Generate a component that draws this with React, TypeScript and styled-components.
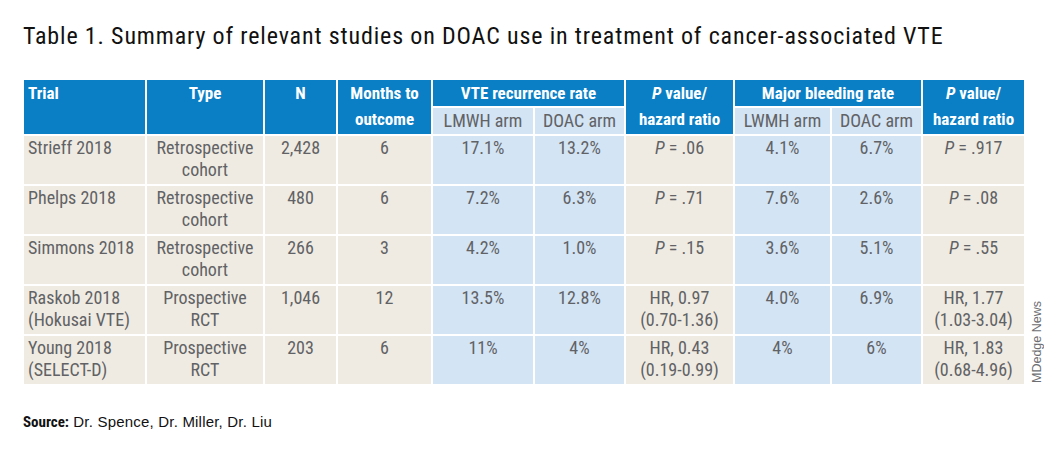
import React from 'react';
import styled, { createGlobalStyle, css } from 'styled-components';

const cond = `"Roboto Condensed", Roboto, "Open Sans", "DejaVu Sans Condensed", sans-serif`;

const GlobalStyle = createGlobalStyle`
    html, body {
        margin: 0;
        padding: 0;
        background: #ffffff;
    }
`;

// ---------------- <Page /> ---------------

const Page = styled.div`
    width: 1056px;
    height: 456px;
    box-sizing: border-box;
    padding: 21px 0 0 23px;
    background: #ffffff;
`;

const Title = styled.h1`
    margin: 0;
    font-family: ${cond};
    font-stretch: 75%;
    font-weight: 400;
    font-size: 24px;
    letter-spacing: 0.85px;
    line-height: 30px;
    color: #111111;
    white-space: nowrap;
`;

const TableRow = styled.div`
    display: flex;
    align-items: flex-end;
    margin-top: 29px;
    margin-left: 1px;
`;

// ---------------- <Grid /> ---------------

const Grid = styled.div`
    display: grid;
    grid-template-columns: 121px 116px 71px 93px 100px 89px 107px 95px 89px 101px;
    grid-template-rows: 26px 26px repeat(5, 48px);
    gap: 2px;
    width: 1000px;
    font-family: ${cond};
    font-stretch: 75%;
    font-size: 18px;
`;

type Tone = 'head' | 'sub' | 'beige' | 'blue';

const toneStyles = {
    head: css`
        background: #0a7fc6;
        color: #ffffff;
        font-weight: 700;
        font-size: 17px;
        line-height: 26px;
    `,
    sub: css`
        background: #d3e4f4;
        color: #616265;
        line-height: 26px;
    `,
    beige: css`
        background: #efebe2;
        color: #616265;
        line-height: 22px;
        padding-top: 1px;
    `,
    blue: css`
        background: #d3e4f4;
        color: #616265;
        line-height: 22px;
        padding-top: 1px;
    `,
};

const Cell = styled.div<{ $tone: Tone; $left?: boolean; $rows?: number; $cols?: number }>`
    box-sizing: border-box;
    padding-left: ${(p) => (p.$left ? '4px' : '0')};
    text-align: ${(p) => (p.$left ? 'left' : 'center')};
    white-space: nowrap;
    ${(p) => p.$rows && css`grid-row: span ${p.$rows};`}
    ${(p) => p.$cols && css`grid-column: span ${p.$cols};`}
    ${(p) => toneStyles[p.$tone]}
`;

const Ital = styled.i`
    font-style: italic;
`;

// ---------------- <Credit /> ---------------

const Credit = styled.div`
    writing-mode: vertical-rl;
    transform: rotate(180deg);
    font-family: "Liberation Sans", Arial, sans-serif;
    font-size: 12.5px;
    line-height: 12px;
    color: #6d6e71;
    margin-left: 7px;
    margin-bottom: 1px;
`;

const Source = styled.p`
    margin: 29px 0 0 0;
    font-family: "Liberation Sans", Arial, sans-serif;
    font-size: 15px;
    letter-spacing: 0.2px;
    color: #111111;

    b {
        font-family: ${cond};
        font-stretch: 75%;
        font-weight: 700;
        font-size: 15px;
        letter-spacing: 0;
    }
`;

type Row = {
    trial: string[];
    type: string[];
    n: string;
    months: string;
    vteL: string;
    vteD: string;
    p1: React.ReactNode;
    bleedL: string;
    bleedD: string;
    p2: React.ReactNode;
};

const pv = (v: string) => (
    <>
        <Ital>P</Ital> = {v}
    </>
);

const hr = (a: string, b: string) => (
    <>
        HR, {a}
        <br />
        {b}
    </>
);

const rows: Row[] = [
    {
        trial: ['Strieff 2018'], type: ['Retrospective', 'cohort'], n: '2,428', months: '6',
        vteL: '17.1%', vteD: '13.2%', p1: pv('.06'), bleedL: '4.1%', bleedD: '6.7%', p2: pv('.917'),
    },
    {
        trial: ['Phelps 2018'], type: ['Retrospective', 'cohort'], n: '480', months: '6',
        vteL: '7.2%', vteD: '6.3%', p1: pv('.71'), bleedL: '7.6%', bleedD: '2.6%', p2: pv('.08'),
    },
    {
        trial: ['Simmons 2018'], type: ['Retrospective', 'cohort'], n: '266', months: '3',
        vteL: '4.2%', vteD: '1.0%', p1: pv('.15'), bleedL: '3.6%', bleedD: '5.1%', p2: pv('.55'),
    },
    {
        trial: ['Raskob 2018', '(Hokusai VTE)'], type: ['Prospective', 'RCT'], n: '1,046', months: '12',
        vteL: '13.5%', vteD: '12.8%', p1: hr('0.97', '(0.70-1.36)'), bleedL: '4.0%', bleedD: '6.9%',
        p2: hr('1.77', '(1.03-3.04)'),
    },
    {
        trial: ['Young 2018', '(SELECT-D)'], type: ['Prospective', 'RCT'], n: '203', months: '6',
        vteL: '11%', vteD: '4%', p1: hr('0.43', '(0.19-0.99)'), bleedL: '4%', bleedD: '6%',
        p2: hr('1.83', '(0.68-4.96)'),
    },
];

const lines = (l: string[]) =>
    l.map((s, i) => (
        <React.Fragment key={i}>
            {i > 0 && <br />}
            {s}
        </React.Fragment>
    ));

export default function App() {
    return (
        <>
            <GlobalStyle />
            <Page>
                <Title>Table 1. Summary of relevant studies on DOAC use in treatment of cancer-associated VTE</Title>
                <TableRow>
                    <Grid>
                        <Cell $tone="head" $rows={2} $left>Trial</Cell>
                        <Cell $tone="head" $rows={2}>Type</Cell>
                        <Cell $tone="head" $rows={2}>N</Cell>
                        <Cell $tone="head" $rows={2}>Months to<br />outcome</Cell>
                        <Cell $tone="head" $cols={2}>VTE recurrence rate</Cell>
                        <Cell $tone="head" $rows={2}><Ital>P</Ital> value/<br />hazard ratio</Cell>
                        <Cell $tone="head" $cols={2}>Major bleeding rate</Cell>
                        <Cell $tone="head" $rows={2}><Ital>P</Ital> value/<br />hazard ratio</Cell>
                        <Cell $tone="sub">LMWH arm</Cell>
                        <Cell $tone="sub">DOAC arm</Cell>
                        <Cell $tone="sub">LWMH arm</Cell>
                        <Cell $tone="sub">DOAC arm</Cell>
                        {rows.map((r) => (
                            <React.Fragment key={r.trial[0]}>
                                <Cell $tone="beige" $left>{lines(r.trial)}</Cell>
                                <Cell $tone="beige">{lines(r.type)}</Cell>
                                <Cell $tone="beige">{r.n}</Cell>
                                <Cell $tone="beige">{r.months}</Cell>
                                <Cell $tone="blue">{r.vteL}</Cell>
                                <Cell $tone="blue">{r.vteD}</Cell>
                                <Cell $tone="beige">{r.p1}</Cell>
                                <Cell $tone="blue">{r.bleedL}</Cell>
                                <Cell $tone="blue">{r.bleedD}</Cell>
                                <Cell $tone="beige">{r.p2}</Cell>
                            </React.Fragment>
                        ))}
                    </Grid>
                    <Credit>MDedge News</Credit>
                </TableRow>
                <Source><b>Source:</b> Dr. Spence, Dr. Miller, Dr. Liu</Source>
            </Page>
        </>
    );
}
